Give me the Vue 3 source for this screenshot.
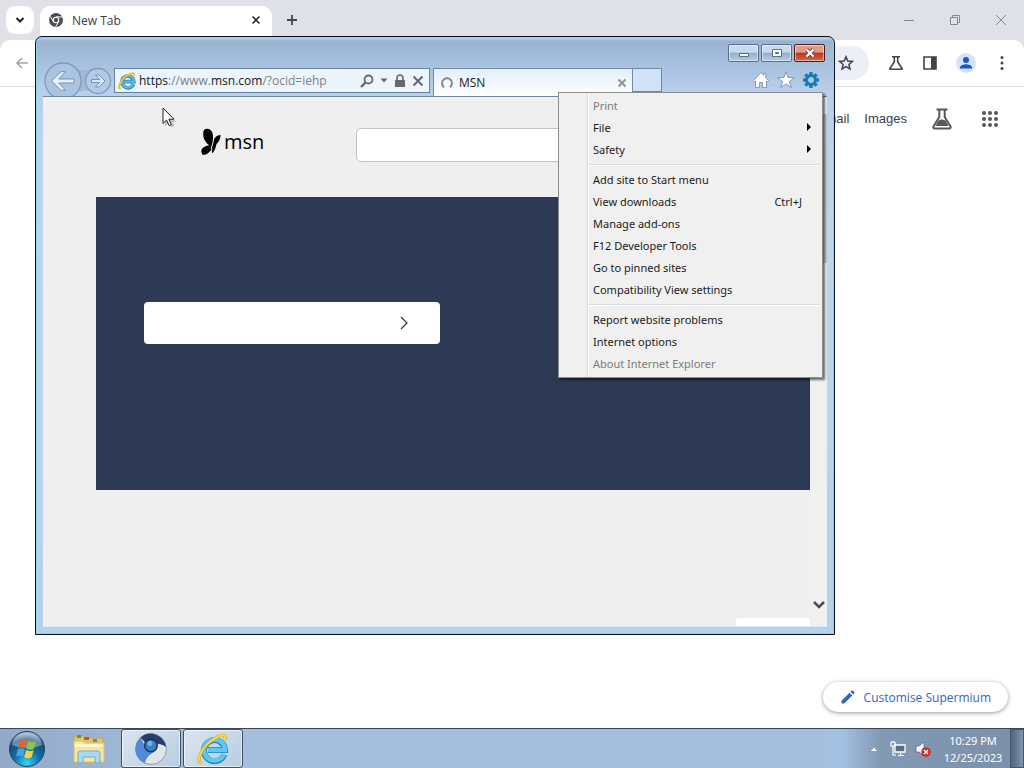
<script setup>
const menuGroups = [
  [
    { label: 'Print', disabled: true },
    { label: 'File', submenu: true },
    { label: 'Safety', submenu: true }
  ],
  [
    { label: 'Add site to Start menu' },
    { label: 'View downloads', shortcut: 'Ctrl+J' },
    { label: 'Manage add-ons' },
    { label: 'F12 Developer Tools' },
    { label: 'Go to pinned sites' },
    { label: 'Compatibility View settings' }
  ],
  [
    { label: 'Report website problems' },
    { label: 'Internet options' },
    { label: 'About Internet Explorer', disabled: true }
  ]
]
const gearTeeth = [0, 45, 90, 135, 180, 225, 270, 315]
const dots = [2, 8, 14]
</script>

<template>
  <div class="desktop">
    <section class="browser">
      <header class="tabstrip">
        <button class="tab-search" aria-label="Search tabs">
          <svg width="10" height="8" viewBox="0 0 10 8"><path d="M1.5 2 5 5.5 8.500 2" fill="none" stroke="#202124" stroke-width="2" /></svg>
        </button>
        <div class="tab">
          <svg width="14" height="14" viewBox="0 0 14 14">
            <circle cx="7" cy="7" r="7" fill="#4a4d51" />
            <circle cx="7" cy="7" r="3.300" fill="#fff" />
            <circle cx="7" cy="7" r="2.200" fill="#4a4d51" />
            <path d="M7 3.900h6.200M4.300 8.500 1.300 3.400M9.700 8.600 6.700 13.700" stroke="#fff" stroke-width="1" />
          </svg>
          <span class="tab-title">New Tab</span>
          <button class="bare" aria-label="Close tab">
            <svg width="10" height="10" viewBox="0 0 10 10"><path d="M1.500 1.500l7 7M8.500 1.500l-7 7" stroke="#303236" stroke-width="1.700" /></svg>
          </button>
        </div>
        <button class="bare new-tab" aria-label="New tab">
          <svg width="12" height="12" viewBox="0 0 12 12"><path d="M6 1v10M1 6h10" stroke="#44474c" stroke-width="1.800" /></svg>
        </button>
        <div class="sys-buttons">
          <button class="bare" aria-label="Minimise"><svg width="12" height="12" viewBox="0 0 12 12"><path d="M1 6.500h10" stroke="#85888d" /></svg></button>
          <button class="bare" aria-label="Restore"><svg width="12" height="12" viewBox="0 0 12 12"><path d="M1.500 3.500h7v7h-7zM3.500 3.500v-2h7v7h-2" fill="none" stroke="#85888d" /></svg></button>
          <button class="bare" aria-label="Close"><svg width="12" height="12" viewBox="0 0 12 12"><path d="M1 1l10 10M11 1 1 11" stroke="#85888d" /></svg></button>
        </div>
      </header>
      <div class="toolbar">
        <button class="bare" aria-label="Back">
          <svg width="14" height="12" viewBox="0 0 14 12"><path d="M13 6H2M7 1 2 6l5 5" fill="none" stroke="#a3a5a8" stroke-width="1.600" /></svg>
        </button>
        <div class="omnibox">
          <button class="bare" aria-label="Bookmark">
            <svg width="16" height="16" viewBox="0 0 16 16"><path d="M8 1.800l1.800 4.200 4.600.4-3.500 3 1.100 4.500L8 11.500 4 13.900l1.100-4.500-3.500-3 4.600-.4z" fill="none" stroke="#404348" stroke-width="1.500" /></svg>
          </button>
        </div>
        <div class="tools">
          <button class="bare" aria-label="Labs">
            <svg width="16" height="16" viewBox="0 0 16 16"><path d="M4 1.800h8M6.300 2v5L2 13.200v1h12v-1L9.700 7V2" fill="none" stroke="#404348" stroke-width="1.600" /></svg>
          </button>
          <button class="bare" aria-label="Side panel">
            <svg width="16" height="16" viewBox="0 0 16 16"><path d="M2 2h12v12H2z" fill="none" stroke="#404348" stroke-width="1.600" /><path d="M9 2h5v12H9z" fill="#404348" /></svg>
          </button>
          <button class="bare" aria-label="Profile">
            <svg width="20" height="20" viewBox="0 0 20 20"><circle cx="10" cy="10" r="10" fill="#d3e3fd" /><circle cx="10" cy="7" r="3" fill="#1a56c4" /><path d="M4 15.500v-1.300c0-2 4-3 6-3s6 1 6 3v1.300z" fill="#1a56c4" /></svg>
          </button>
          <button class="bare more" aria-label="More">
            <svg width="4" height="16" viewBox="0 0 4 16"><g fill="#404348"><circle cx="2" cy="2.500" r="1.500" /><circle cx="2" cy="8" r="1.500" /><circle cx="2" cy="13.500" r="1.500" /></g></svg>
          </button>
        </div>
      </div>
      <main class="ntp">
        <nav class="ntp-links">
          <a href="#">Gmail</a>
          <a href="#">Images</a>
          <button class="bare labs" aria-label="Search labs">
            <svg width="20" height="22" viewBox="0 0 20 22"><path d="M4.500 1.500h11M7.300 2v7L1.500 18.500c-.500 1 .2 2 1.300 2h14.400c1.100 0 1.800-1 1.300-2L12.700 9V2" fill="none" stroke="#55585c" stroke-width="2" /><path d="M6.500 12.500c2-1.500 4.500-1 7 0l3 5.500h-13z" fill="#55585c" /></svg>
          </button>
          <button class="bare" aria-label="Apps">
            <svg width="16" height="16" viewBox="0 0 16 16" fill="#55585c"><template v-for="y in dots" :key="y"><circle v-for="x in dots" :key="x" :cx="x" :cy="y" r="2" /></template></svg>
          </button>
        </nav>
        <button class="customise">
          <svg width="14" height="14" viewBox="0 0 14 14" fill="#2f65cf"><path d="M0.500 10.800 8.600 2.700l2.700 2.700-8.100 8.100H.5zM9.500 1.800l1.200-1.200c.3-.3.700-.3 1 0l1.700 1.700c.3.3.3.700 0 1l-1.200 1.200z" /></svg>
          <span>Customise Supermium</span>
        </button>
      </main>
    </section>

    <footer class="taskbar">
      <button class="start" aria-label="Start">
        <svg width="38" height="38" viewBox="0 0 38 38">
          <defs>
            <radialGradient id="orb" cx="50%" cy="90%" r="85%"><stop offset="0" stop-color="#39d3f2" /><stop offset=".45" stop-color="#0d6fa5" /><stop offset=".8" stop-color="#174a73" /><stop offset="1" stop-color="#86a9c4" /></radialGradient>
          </defs>
          <circle cx="19" cy="19" r="17.500" fill="url(#orb)" stroke="#27455f" />
          <path d="M4 15C6 6 13 2.500 19 2.500S32 6 34 15c-8 4-22 4-30 0z" fill="#fff" opacity=".35" />
          <path d="M12 10.500c2.500-1.500 4.500-1.500 7 0l-1.800 7.500c-2.500-1.400-4.500-1.400-7 0z" fill="#e8632a" />
          <path d="M20.300 11.200c2.500 1.500 5 1.500 7.700 0l-2 7.500c-2.500 1.400-5 1.400-7.500 0z" fill="#8fc641" />
          <path d="M9.800 19.300c2.500-1.400 4.500-1.400 7 0L15 26.500c-2.500-1.400-4.500-1.400-7 0z" fill="#4ba4e0" />
          <path d="M18.100 20c2.500 1.500 5 1.500 7.500 0l-2 7.300c-2.500 1.400-5 1.400-7.400 0z" fill="#fbd03c" />
        </svg>
      </button>
      <button class="task plain" aria-label="Explorer">
        <svg width="34" height="30" viewBox="0 0 34 30">
          <path d="M2 5V2h10l2 2h17v24H2z" fill="#e3c56b" stroke="#c3a351" />
          <path d="M5 1h4v3H5z" fill="#3fa34a" /><path d="M12 3h5v3h-5z" fill="#d3502f" /><path d="M21 5h4v3h-4z" fill="#4c8fcc" />
          <path d="M2 7h9l2 2h19v19H2z" fill="#f6e6a2" stroke="#dcc273" />
          <path d="M3 10h28v3H3z" fill="#fff6cb" />
          <path d="M6 29V19c0-1 .8-2 2-2h18c1.200 0 2 1 2 2v10h-5v-6H11v6z" fill="#a9d8ef" stroke="#69aed2" />
        </svg>
      </button>
      <button class="task" aria-label="Supermium">
        <svg width="32" height="32" viewBox="0 0 32 32">
          <circle cx="16" cy="16" r="15.500" fill="#dfe5ed" stroke="#8c9bb3" />
          <path d="M16 16 5.500 4.500A15.500 15.500 0 0 1 31 14c-4-3-9-4-15-4z" fill="#273f70" />
          <path d="M5.500 4.500A15.500 15.500 0 0 0 10 30.300c1-6 5-9 9-11.300L10 13z" fill="#5388d2" />
          <circle cx="16" cy="12.500" r="7" fill="#1d3153" /><circle cx="16" cy="12.500" r="5.500" fill="#3480c9" /><circle cx="15" cy="10.500" r="2.500" fill="#72b4ea" />
        </svg>
      </button>
      <button class="task" aria-label="Internet Explorer">
        <svg width="32" height="32" viewBox="0 0 32 32">
          <path d="M27.300 21.500A10.500 10.500 0 1 1 28 17H11" fill="none" stroke="#2580bd" stroke-width="6" />
          <path d="M27 21.500A10.500 10.500 0 1 1 28 17H11" fill="none" stroke="#5cc8f0" stroke-width="4.500" />
          <path d="M5 30C-1 29 3 18 11 10.500 18 4 26 .5 28 3c.7 1.200.3 2.500-.8 4" fill="none" stroke="#c99a1c" stroke-width="3" />
          <path d="M5 30C-1 29 3 18 11 10.500 18 4 26 .5 28 3c.7 1.200.3 2.500-.8 4" fill="none" stroke="#f9d648" stroke-width="2.200" />
        </svg>
      </button>
      <div class="tray">
        <button class="bare" aria-label="Show hidden icons"><svg width="10" height="6" viewBox="0 0 10 6"><path d="M1 5.500 5 1l4 4.500z" fill="#fff" stroke="#5b7186" stroke-width=".5" /></svg></button>
        <svg class="net" width="16" height="16" viewBox="0 0 16 16"><path d="M5 4h10v7H5z" fill="#596b80" stroke="#fff" stroke-width="1.300" /><path d="M8 14.500h6M10.500 11v3M1 1v4h4V1M3 5v9h3M2 0v2M4 0v2" fill="none" stroke="#fff" stroke-width="1.200" /></svg>
        <svg width="16" height="16" viewBox="0 0 16 16"><path d="M1 5h3l5-4v14l-5-4H1z" fill="#f2f5f8" stroke="#51657a" stroke-width=".7" /><circle cx="11" cy="11" r="4.800" fill="#cf2b2b" /><path d="M9 9l4 4M13 9l-4 4" stroke="#fff" stroke-width="1.500" /></svg>
        <div class="clock"><span>10:29 PM</span><span>12/25/2023</span></div>
        <button class="show-desktop" aria-label="Show desktop"></button>
      </div>
    </footer>

    <section class="ie">
      <div class="caption">
        <button class="cap" aria-label="Minimise"><svg width="14" height="10" viewBox="0 0 14 10"><path d="M2.500 5.500h9v3h-9z" fill="#fff" stroke="#5b6f87" /></svg></button>
        <button class="cap" aria-label="Maximise"><svg width="14" height="10" viewBox="0 0 14 10"><path d="M2.500 1.500h9v7h-9z" fill="#fff" stroke="#5b6f87" /><path d="M5.500 4.500h3v1h-3z" fill="#8aa3be" stroke="#5b6f87" /></svg></button>
        <button class="cap close" aria-label="Close"><svg width="14" height="10" viewBox="0 0 14 10"><path d="M3.500 1.500l7 7M10.500 1.500l-7 7" stroke="#6b3a3a" stroke-width="4" /><path d="M3.500 1.500l7 7M10.500 1.500l-7 7" stroke="#fff" stroke-width="2.400" /></svg></button>
      </div>
      <div class="navrow">
        <button class="bare nav-arrows" aria-label="Back and forward">
          <svg width="70" height="36" viewBox="0 0 70 36">
            <path d="M31 5c5 4 11 4 16 2l10-1v26l-10-3c-6-1-12 0-16 3z" fill="#98b2d0" opacity=".7" />
            <circle cx="20" cy="19" r="18" fill="#abc4e2" stroke="#7f9abb" stroke-width="1.300" />
            <circle cx="55" cy="19" r="12.500" fill="#b2cae6" stroke="#7f9abb" stroke-width="1.300" />
            <path d="M8.500 19 18 9.700h4.500L15.700 17H31v4H15.700l6.800 7.300H18z" fill="#e6f0fb" stroke="#7691b3" />
            <path d="M62 19l-6-6h-3.500l4.300 4.500H48.500v3h8.300L52.500 25H56z" fill="#dbe8f7" stroke="#7691b3" />
          </svg>
        </button>
        <div class="address">
          <svg width="18" height="18" viewBox="0 0 32 32">
            <path d="M27.300 21.500A10.500 10.500 0 1 1 28 17H11" fill="none" stroke="#2580bd" stroke-width="6.500" />
            <path d="M27 21.500A10.500 10.500 0 1 1 28 17H11" fill="none" stroke="#54b8e8" stroke-width="4" />
            <path d="M5 30C-1 29 3 18 11 10.500 18 4 26 .5 28 3c.7 1.200.3 2.500-.8 4" fill="none" stroke="#edc12d" stroke-width="3.500" />
          </svg>
          <span class="url"><b>https</b>://www.<b>msn.com</b>/?ocid=iehp</span>
          <button class="bare" aria-label="Search"><svg width="14" height="14" viewBox="0 0 14 14"><circle cx="8.500" cy="5.500" r="4" fill="none" stroke="#66696e" stroke-width="1.800" /><path d="M5.500 8.500 1 13" stroke="#66696e" stroke-width="2.400" /></svg></button>
          <button class="bare" aria-label="Suggestions"><svg width="8" height="5" viewBox="0 0 8 5"><path d="M.5.5h7L4 4.500z" fill="#66696e" /></svg></button>
          <button class="bare" aria-label="Security"><svg width="12" height="14" viewBox="0 0 12 14"><path d="M1 6h10v7H1z" fill="#66696e" /><path d="M3 6.500V4a3 3 0 0 1 6 0v2.500" fill="none" stroke="#66696e" stroke-width="1.600" /></svg></button>
          <button class="bare" aria-label="Stop"><svg width="12" height="12" viewBox="0 0 12 12"><path d="M1.500 1.500l9 9M10.500 1.500l-9 9" stroke="#66696e" stroke-width="2" /></svg></button>
        </div>
        <div class="ie-tab">
          <svg width="14" height="14" viewBox="0 0 14 14"><path d="M4 11.200a5 5 0 1 1 6 0" fill="none" stroke="#85888d" stroke-width="2" /></svg>
          <span>MSN</span>
          <button class="bare" aria-label="Close MSN tab"><svg width="10" height="10" viewBox="0 0 10 10"><path d="M1.500 1.500l7 7M8.500 1.500l-7 7" stroke="#909397" stroke-width="2" /></svg></button>
        </div>
        <button class="ie-new" aria-label="New tab"></button>
        <div class="ie-tools">
          <button class="bare" aria-label="Home"><svg width="18" height="18" viewBox="0 0 18 18"><path d="M1.500 9.500 9 1.500l2.500 2.700V2.500h2.300v4.200l2.700 2.800-1.300 1.200-.7-.6v6.400h-4v-5h-3v5h-4v-6.400l-.7.600z" fill="#fff" stroke="#74869c" stroke-width=".8" /></svg></button>
          <button class="bare" aria-label="Favourites"><svg width="18" height="18" viewBox="0 0 18 18"><path d="M9 .8l2.100 5.700 6.300.2-5 3.800 1.900 6-5.300-3.500-5.300 3.500 1.900-6-5-3.800 6.300-.2z" fill="#fff" stroke="#74869c" stroke-width=".8" /></svg></button>
          <button class="bare" aria-label="Tools" aria-expanded="true"><svg width="18" height="18" viewBox="0 0 18 18"><path v-for="a in gearTeeth" :key="a" d="M7.300 1h3.400v4H7.300z" fill="#157db5" :transform="`rotate(${a} 9 9)`" /><circle cx="9" cy="9" r="4.500" fill="none" stroke="#157db5" stroke-width="3" /></svg></button>
        </div>
      </div>
      <div class="viewport">
        <div class="page">
          <header class="msn-head">
            <a href="#" class="msn-logo">
              <svg width="20" height="28" viewBox="0 0 20 28"><path d="M3 2C6-.5 10 1 11.500 5c.8 2.500.5 6 .2 8.300C13 10 16 7 19.500 7c.3 4-2 7-4 9-.7 3-1.500 6.500-4 9.300-1-1-.5-3.500 0-5.300C9.500 23 6 27.500 1.500 26.800-.5 24 0 20 4 18.500c1.500-.6 3-.8 4-1.500C4 14 .5 8 3 2z" fill="#000" /><path d="M13 9.500 11.600 16 10 21" fill="none" stroke="#efefef" /></svg>
              <span>msn</span>
            </a>
            <input class="msn-search" type="text" aria-label="Search the web" />
          </header>
          <div class="hero">
            <button class="hero-card" aria-label="Open"><svg width="8" height="14" viewBox="0 0 8 14"><path d="M1 1l6 6-6 6" fill="none" stroke="#333" stroke-width="1.200" /></svg></button>
          </div>
          <div class="feedback"></div>
        </div>
        <div class="scrollbar">
          <div class="thumb"></div>
          <svg width="12" height="8" viewBox="0 0 12 8"><path d="M1 1l5 5 5-5" fill="none" stroke="#4c4f52" stroke-width="2.600" /></svg>
        </div>
      </div>
      <div class="menu" role="menu">
        <ul v-for="(group, i) in menuGroups" :key="i">
          <li v-for="item in group" :key="item.label">
            <button role="menuitem" :disabled="item.disabled">
              <span>{{ item.label }}</span>
              <kbd v-if="item.shortcut">{{ item.shortcut }}</kbd>
              <svg v-if="item.submenu" width="4" height="8" viewBox="0 0 4 8"><path d="M0 0l4 4-4 4z" fill="#000" /></svg>
            </button>
          </li>
        </ul>
      </div>
    </section>

    <svg class="cursor" width="14" height="21" viewBox="0 0 14 21"><path d="M3 2.500V19l4-3 2.500 4.500 3-1.500L10 15h4z" fill="#000" opacity=".2" /><path d="M1 1v15.500l3.600-3.400 2.500 5.600 2.300-1-2.500-5.500H12z" fill="#fff" stroke="#222" /></svg>
  </div>
</template>

<style>
body {
  margin: 0;
}
</style>

<style scoped>
* {
  box-sizing: border-box;
}
.desktop {
  position: relative;
  display: flex;
  flex-direction: column;
  min-height: 100vh;
  overflow: hidden;
  font-family: "Open Sans", "Noto Sans", sans-serif;
  font-size: 12px;
  color: #1b1b1b;
}
svg {
  display: block;
  flex: none;
}
button {
  font: inherit;
  color: inherit;
}
.bare {
  display: block;
  padding: 0;
  border: 0;
  background: none;
}
.browser {
  flex: 1;
  display: flex;
  flex-direction: column;
  background: #dfe1e7;
}
.tabstrip {
  display: flex;
  align-items: center;
  height: 40px;
  padding: 0 17px 0 6px;
}
.tab-search {
  display: grid;
  place-items: center;
  width: 28px;
  height: 28px;
  margin-right: 6px;
  padding: 0;
  border: 0;
  border-radius: 9px;
  background: #fff;
}
.tab {
  align-self: flex-end;
  display: flex;
  align-items: center;
  width: 232px;
  height: 34px;
  padding: 0 11px 6px 9px;
  border-radius: 10px 10px 0 0;
  background: #fff;
}
.tab-title {
  flex: 1;
  margin-left: 9px;
  color: #3c4043;
}
.new-tab {
  margin-left: 14px;
}
.sys-buttons {
  display: flex;
  gap: 34px;
  margin-left: auto;
}
.toolbar {
  display: flex;
  align-items: center;
  height: 47px;
  padding: 0 20px 0 15px;
  border-bottom: 1px solid #dcdee2;
  border-radius: 10px 10px 0 0;
  background: #fff;
}
.omnibox {
  flex: 1;
  display: flex;
  align-items: center;
  justify-content: flex-end;
  height: 34px;
  margin: 0 19px 0 90px;
  padding-right: 15px;
  border-radius: 17px;
  background: #eceff7;
}
.tools {
  display: flex;
  align-items: center;
  gap: 18px;
}
.more {
  margin-left: 6px;
}
.ntp {
  flex: 1;
  display: flex;
  flex-direction: column;
  justify-content: space-between;
  align-items: flex-end;
  padding: 16px;
  background: #fff;
}
.ntp-links {
  display: flex;
  align-items: center;
  gap: 15px;
  height: 32px;
  padding-right: 10px;
  font-family: "Liberation Sans", Arial, sans-serif;
  font-size: 13px;
}
.ntp-links a {
  padding-bottom: 2px;
  color: #3c4043;
  text-decoration: none;
}
.labs {
  margin: 0 15px 0 10px;
}
.customise {
  display: flex;
  align-items: center;
  gap: 9px;
  height: 30px;
  padding: 0 17px 0 18px;
  border: 0;
  border-radius: 15px;
  background: #fff;
  box-shadow: 0 1px 4px rgba(0, 0, 0, 0.4);
  color: #3464c4;
}
.taskbar {
  display: flex;
  align-items: center;
  height: 40px;
  border-top: 1px solid #33475f;
  background: linear-gradient(90deg, #92aac7, #a4bfdd 20%, #a3bfdd 80%, #a4c3e3 82%, #8299b4 86%, #7b8fa8);
}
.start {
  margin-left: 8px;
  padding: 0;
  border: 0;
  background: none;
}
.task {
  display: grid;
  place-items: center;
  width: 60px;
  height: 39px;
  padding: 0;
  border: 1px solid #3d4f66;
  border-radius: 3px;
  background: linear-gradient(135deg, #dbe5f1, #b9cce1);
  box-shadow: inset 0 0 0 1px rgba(255, 255, 255, 0.6);
}
.task + .task {
  margin-left: 2px;
}
.plain {
  margin-left: 13px;
  border-color: transparent;
  background: none;
  box-shadow: none;
}
.tray {
  display: flex;
  align-items: center;
  align-self: stretch;
  margin-left: auto;
}
.net {
  margin: 0 9px 0 11px;
}
.clock {
  display: flex;
  flex-direction: column;
  width: 60px;
  margin: 0 7px 0 12px;
  color: #fff;
  line-height: 17px;
  text-align: center;
  white-space: nowrap;
  font-family: "Noto Sans", sans-serif;
  font-size: 11px;
}
.show-desktop {
  align-self: stretch;
  width: 14px;
  padding: 0;
  border: 1px solid #43566d;
  background: linear-gradient(90deg, #52647b, #8195ad);
}
.ie {
  position: absolute;
  left: 35px;
  top: 36px;
  display: flex;
  flex-direction: column;
  width: 800px;
  height: 599px;
  padding: 0 7px 7px;
  border: 1px solid #0b1320;
  border-radius: 7px 7px 0 0;
  background: linear-gradient(180deg, #c5dcf5 0, #99b3d1 4px, #b8d0ee 56px, #bdd5ee 200px, #b4d2ea);
  box-shadow: inset 0 0 0 1px #8fd3e8;
}
.caption {
  display: flex;
  justify-content: flex-end;
  gap: 2px;
  padding: 7px 2px 0 0;
}
.cap {
  display: grid;
  place-items: center;
  width: 31px;
  height: 18px;
  padding: 0;
  border: 1px solid #56708f;
  border-radius: 2px;
  background: linear-gradient(180deg, #c9daee 45%, #94afcd 50%, #b3cbe5);
  box-shadow: inset 0 0 0 1px rgba(255, 255, 255, 0.5);
}
.close {
  border-color: #4e1b1d;
  background: linear-gradient(180deg, #e19c8d 45%, #b9361f 50%, #d26b50);
}
.navrow {
  display: flex;
  align-items: flex-start;
  height: 34px;
}
.nav-arrows {
  height: 34px;
  overflow: hidden;
}
.address {
  display: flex;
  align-items: center;
  gap: 6px;
  flex: 0 0 316px;
  height: 25px;
  margin: 6px 3px 0 1px;
  padding: 0 5px 0 3px;
  border: 1px solid #67829f;
  background: #ecf4fc;
}
.url {
  flex: 1;
  margin-left: -3px;
  color: #7d8186;
  white-space: nowrap;
}
.url b {
  color: #16181b;
  font-weight: 400;
}
.ie-tab {
  display: flex;
  align-items: center;
  gap: 5px;
  width: 200px;
  height: 28px;
  margin-top: 6px;
  padding: 0 5px 0 6px;
  border: 1px solid #7189a3;
  border-bottom: 0;
  background: linear-gradient(180deg, #e3effb, #fff);
}
.ie-tab span {
  flex: 1;
}
.ie-new {
  width: 29px;
  height: 24px;
  margin-top: 6px;
  padding: 0;
  border: 1px solid #7189a3;
  border-left: 0;
  background: #cfe2f6;
}
.ie-tools {
  display: flex;
  gap: 7px;
  margin: 9px 7px 0 auto;
}
.viewport {
  flex: 1;
  display: flex;
  border: solid #dbe9f6;
  border-width: 1px 0;
  border-top-color: #74879d;
  background: #efefef;
}
.page {
  flex: 1;
  display: flex;
  flex-direction: column;
}
.msn-head {
  display: flex;
  gap: 92px;
  height: 100px;
  padding: 31px 0 0 158px;
}
.msn-logo {
  display: flex;
  gap: 3px;
  height: 28px;
  color: #000;
  text-decoration: none;
  font-size: 20px;
  line-height: 28px;
}
.msn-search {
  flex: 1;
  height: 34px;
  border: 1px solid #c3c3c3;
  border-radius: 5px;
  background: #fff;
}
.hero {
  height: 293px;
  margin-left: 53px;
  padding: 105px 48px 0;
  background: #2d3955;
}
.hero-card {
  display: flex;
  align-items: center;
  justify-content: flex-end;
  width: 296px;
  height: 42px;
  padding: 0 32px 0 0;
  border: 0;
  border-radius: 4px;
  background: #fff;
}
.feedback {
  align-self: flex-end;
  width: 74px;
  height: 8px;
  margin-top: auto;
  border-radius: 2px 2px 0 0;
  background: #fff;
}
.scrollbar {
  display: flex;
  flex-direction: column;
  justify-content: space-between;
  align-items: center;
  width: 17px;
  padding: 17px 0;
  background: #f0f0f0;
}
.thumb {
  width: 100%;
  height: 149px;
  background: #c4c4c6;
}
.menu {
  position: absolute;
  left: 522px;
  top: 55px;
  width: 265px;
  padding: 1px 2px 3px 0;
  border: 1px solid #8b8d90;
  background: linear-gradient(90deg, transparent 28px, #dcdcdc 28px, #dcdcdc 29px, #fff 29px, #fff 30px, transparent 30px), #f0f0f0;
  box-shadow: 2px 2px 2px rgba(0, 0, 0, 0.55);
  font-family: "Noto Sans", sans-serif;
  font-size: 11px;
}
.menu ul {
  margin: 0;
  padding: 0;
  list-style: none;
}
.menu ul + ul {
  padding-top: 8px;
  background: linear-gradient(180deg, transparent 4px, #dcdcdc 4px, #dcdcdc 5px, #fff 5px, #fff 6px, transparent 6px) 30px 0 / 100% 8px no-repeat;
}
.menu button {
  display: flex;
  align-items: center;
  justify-content: space-between;
  width: 100%;
  height: 22px;
  padding: 0 9px 0 34px;
  border: 0;
  background: none;
  text-align: left;
}
.menu button:disabled {
  color: #7c7c7c;
}
.menu kbd {
  margin-right: 9px;
  font: inherit;
}
.cursor {
  position: absolute;
  left: 162px;
  top: 107px;
}
</style>
